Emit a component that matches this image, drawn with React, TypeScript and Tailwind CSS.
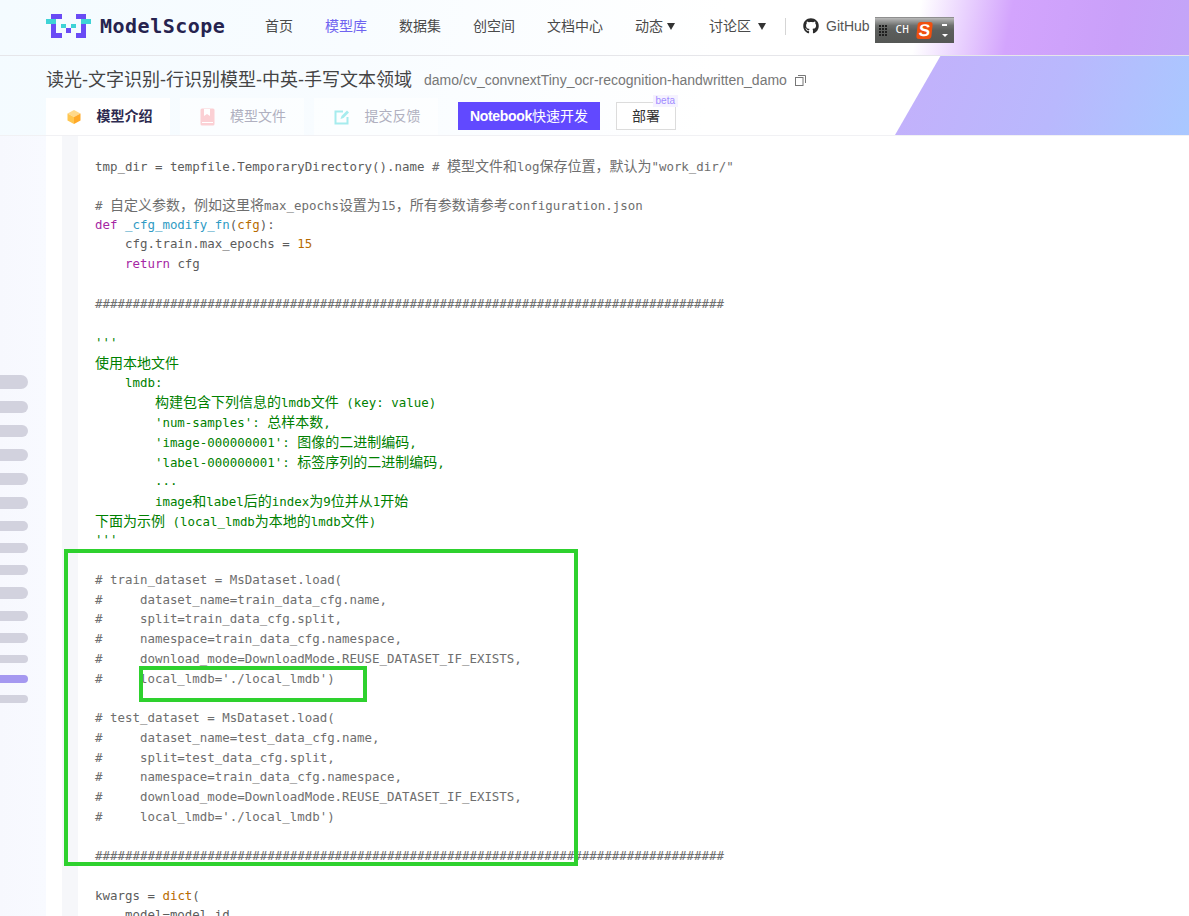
import { FaGithub } from "react-icons/fa";

const GRAY = "text-[#5c5c5c]";
const COMMENT = "text-[#6e6e6e]";
const GREEN = "text-[#008000]";
const PURPLE = "text-[#a626a4]";
const BLUE = "text-[#2f9bc4]";
const ORANGE = "text-[#b76b01]";

type Token = [string, string];
type Line = Token[];

const hashes = "#".repeat(84);
const c = (t: string): Line => [[t, COMMENT]];
const g = (t: string): Line => [[t, GREEN]];
const t = (s: string): Line => [[s, GRAY]];

const CODE: Line[] = [
  [
    ["tmp_dir = tempfile.TemporaryDirectory().name ", GRAY],
    ['# 模型文件和log保存位置，默认为"work_dir/"', COMMENT],
  ],
  [],
  c("# 自定义参数，例如这里将max_epochs设置为15，所有参数请参考configuration.json"),
  [
    ["def ", PURPLE],
    ["_cfg_modify_fn", BLUE],
    ["(", GRAY],
    ["cfg", ORANGE],
    ["):", GRAY],
  ],
  [
    ["    cfg.train.max_epochs = ", GRAY],
    ["15", ORANGE],
  ],
  [
    ["    ", GRAY],
    ["return", PURPLE],
    [" cfg", GRAY],
  ],
  [],
  c(hashes),
  [],
  g("'''"),
  g("使用本地文件"),
  g("    lmdb:"),
  g("        构建包含下列信息的lmdb文件 (key: value)"),
  g("        'num-samples': 总样本数,"),
  g("        'image-000000001': 图像的二进制编码,"),
  g("        'label-000000001': 标签序列的二进制编码,"),
  g("        ..."),
  g("        image和label后的index为9位并从1开始"),
  g("下面为示例 (local_lmdb为本地的lmdb文件)"),
  g("'''"),
  [],
  c("# train_dataset = MsDataset.load("),
  c("#     dataset_name=train_data_cfg.name,"),
  c("#     split=train_data_cfg.split,"),
  c("#     namespace=train_data_cfg.namespace,"),
  c("#     download_mode=DownloadMode.REUSE_DATASET_IF_EXISTS,"),
  c("#     local_lmdb='./local_lmdb')"),
  [],
  c("# test_dataset = MsDataset.load("),
  c("#     dataset_name=test_data_cfg.name,"),
  c("#     split=test_data_cfg.split,"),
  c("#     namespace=train_data_cfg.namespace,"),
  c("#     download_mode=DownloadMode.REUSE_DATASET_IF_EXISTS,"),
  c("#     local_lmdb='./local_lmdb')"),
  [],
  c(hashes),
  [],
  [
    ["kwargs = ", GRAY],
    ["dict", ORANGE],
    ["(", GRAY],
  ],
  t("    model=model_id,"),
];

// outline rail on the left edge: [height, gap above]
const PILLS: [number, number][] = [
  [14, 0], [12, 12], [12, 12], [12, 12], [12, 12], [12, 12], [10, 12], [10, 12],
  [10, 12], [12, 12], [10, 12], [10, 12], [8, 12], [8, 12], [8, 12],
];

// latin is narrower than the CJK in the mono stack, so CJK runs get their own size
function CodeText({ text }: { text: string }) {
  const parts = text.split(/([\u3000-\u9fff\uff00-\uffef]+)/);
  return (
    <>
      {parts.map((p, i) =>
        i % 2 === 1 ? (
          <span key={i} className="font-['Noto_Sans_CJK_SC',sans-serif] text-[14px]">
            {p}
          </span>
        ) : (
          <span key={i}>{p}</span>
        ),
      )}
    </>
  );
}

function Logo() {
  const purple = "#6a4bf5";
  const teal = "#3fd3d6";
  return (
    <svg width="46" height="25" viewBox="46 13 46 25" className="shrink-0" shapeRendering="crispEdges">
      <g fill={purple}>
        <rect x="51" y="13" width="11" height="5" />
        <rect x="51" y="23" width="5" height="14" />
        <rect x="51" y="32" width="11" height="5" />
        <rect x="76" y="13" width="10" height="5" />
        <rect x="81" y="23" width="5" height="14" />
        <rect x="76" y="32" width="10" height="5" />
        <rect x="66" y="27" width="5" height="5" />
      </g>
      <g fill={teal}>
        <rect x="46" y="18" width="10" height="5" />
        <rect x="81" y="18" width="10" height="5" />
        <rect x="61" y="23" width="5" height="4" />
        <rect x="71" y="23" width="5" height="4" />
      </g>
    </svg>
  );
}

function Cube() {
  return (
    <svg width="16" height="16" viewBox="0 0 16 16" className="shrink-0">
      <path d="M8 1l6.5 3.4L8 8 1.5 4.4z" fill="#ffd98a" />
      <path d="M1.5 4.4L8 8v7l-6.5-3.5z" fill="#ffc64f" />
      <path d="M14.5 4.4L8 8v7l6.5-3.5z" fill="#ffa928" />
    </svg>
  );
}

function Book() {
  return (
    <svg width="15" height="18" viewBox="0 0 15 18" className="shrink-0">
      <rect x="0.5" y="0.5" width="14" height="17" rx="1.5" fill="#fbd0d4" />
      <path d="M4 1h6v7L7 6 4 8z" fill="#fff" />
      <rect x="2" y="14" width="11" height="1" fill="#fff" />
    </svg>
  );
}

function EditIcon() {
  return (
    <svg width="16" height="16" viewBox="0 0 16 16" fill="none" className="shrink-0">
      <path d="M9 2.5H1.5v12h12V8" stroke="#a6ecee" strokeWidth="2" />
      <path d="M6.5 10l1-3L13 1.5l2 2L9.5 9z" fill="#a6ecee" />
    </svg>
  );
}

function CopyIcon() {
  return (
    <svg width="11" height="11" viewBox="0 0 11 11" fill="none" className="shrink-0">
      <rect x="0.5" y="2.5" width="7.5" height="8" stroke="#777" />
      <path d="M3 .5h7.5V8" stroke="#777" />
    </svg>
  );
}

function ImeBar() {
  return (
    <div className="mt-[7px] ml-[5px] flex h-[26px] w-[79px] items-center border-t border-[#8f8f8f] bg-[linear-gradient(#b9b9b9_0%,#6e706e_30%,#5c5e5c_50%,#555755_100%)] pl-[4px]">
      <div className="grid grid-cols-3 gap-[1px]">
        {Array.from({ length: 12 }).map((_, i) => (
          <span key={i} className="h-[2px] w-[2px] bg-[#1f1f1f]" />
        ))}
      </div>
      <span className="ml-[9px] font-['DejaVu_Sans_Mono',monospace] text-[11px] text-white">CH</span>
      <span className="ml-[8px] flex h-[17px] w-[15px] skew-x-[-6deg] items-center justify-center rounded-[3px] bg-[#f0500f] font-['Liberation_Sans',sans-serif] text-[17px] leading-none font-bold text-white">
        S
      </span>
      <div className="ml-[10px] flex flex-col items-center gap-[8px]">
        <span className="h-[2px] w-[5px] bg-white" />
        <span className="h-0 w-0 border-x-[3px] border-t-[3px] border-x-transparent border-t-white" />
      </div>
    </div>
  );
}

function NavItem({ label, active, caret }: { label: string; active?: boolean; caret?: string }) {
  return (
    <span className={`flex items-center ${active ? "text-[#6f63f0]" : "text-[#4a4a4a]"}`}>
      {label}
      {caret && <span className={`${caret} h-0 w-0 border-x-[4px] border-t-[7px] border-x-transparent border-t-[#333]`} />}
    </span>
  );
}

function Tab({ icon, label, active }: { icon: React.ReactNode; label: string; active?: boolean }) {
  return (
    <div
      className={`flex h-[37px] w-[124px] items-center justify-center gap-[15px] pl-[2px] text-[14px] ${
        active ? "bg-white font-bold text-[#2d2a50]" : "bg-white/50 text-[#b0b0c0]"
      }`}
    >
      {icon}
      {label}
    </div>
  );
}

export default function App() {
  return (
    <div className="relative flex h-[916px] w-full flex-col overflow-hidden bg-white font-['Liberation_Sans','Noto_Sans_CJK_SC',sans-serif]">
      <header className="relative h-[136px] shrink-0 border-b border-[#f1f1f4] bg-[linear-gradient(100deg,#f4fbff_0%,#f8fcff_30%,#ffffff_60%)]">
        {/* purple wash behind the header */}
        <div className="absolute top-0 right-0 h-[55px] w-[360px] bg-[linear-gradient(100deg,rgba(255,255,255,0)_25%,#d3a4fd_50%,#c9a0f9_80%,#c3a5f8_100%)]" />
        <div className="absolute top-[55px] right-0 h-[80px] w-[294px] bg-[linear-gradient(110deg,#c4b0fb_0%,#b9b8fd_55%,#a9c8ff_100%)] [clip-path:polygon(46px_0,100%_0,100%_100%,0_100%)]" />

        <nav className="relative flex h-[56px] items-center border-b border-[#e6e6ea] pb-[3px] pl-[46px] text-[14px]">
          <Logo />
          <span className="ml-[8px] w-[157px] font-['DejaVu_Sans_Mono',monospace] text-[20px] leading-none font-bold tracking-[0.5px] text-[#26234f]">
            ModelScope
          </span>
          <div className="ml-[8px] flex items-center gap-[32px]">
            <NavItem label="首页" />
            <NavItem label="模型库" active />
            <NavItem label="数据集" />
            <NavItem label="创空间" />
            <NavItem label="文档中心" />
            <NavItem label="动态" caret="ml-[4px]" />
            <span className="ml-[2px]">
              <NavItem label="讨论区" caret="ml-[7px]" />
            </span>
          </div>
          <span className="ml-[19px] h-[17px] w-px bg-[#d5d5d5]" />
          <FaGithub className="ml-[17px] shrink-0 text-[#2b2b2b]" size={16} />
          <span className="ml-[7px] text-[#555]">GitHub</span>
          <ImeBar />
        </nav>

        <div className="relative flex h-[42px] items-center pt-[6px] pl-[46px]">
          <h1 className="text-[18px] leading-none font-normal text-[#444]">读光-文字识别-行识别模型-中英-手写文本领域</h1>
          <span className="ml-[12px] text-[14px] text-[#777]">damo/cv_convnextTiny_ocr-recognition-handwritten_damo</span>
          <span className="ml-[8px]">
            <CopyIcon />
          </span>
        </div>

        <div className="relative flex items-start pl-[46px]">
          <Tab icon={<Cube />} label="模型介绍" active />
          <span className="w-[10px]" />
          <Tab icon={<Book />} label="模型文件" />
          <span className="w-[10px]" />
          <Tab icon={<EditIcon />} label="提交反馈" />
          <button className="mt-[4px] ml-[20px] flex h-[28px] w-[142px] items-center justify-center bg-[#6149ff] text-[14px] text-white">
            <span className="font-bold tracking-[-0.3px]">Notebook</span>快速开发
          </button>
          <button className="relative mt-[4px] ml-[16px] flex h-[28px] w-[60px] items-center justify-center border border-[#dcdcdc] bg-white text-[14px] text-[#333]">
            部署
            <span className="absolute top-[-8px] right-[-3px] bg-[#f5f2ff] px-[3px] text-[10px] leading-[12px] text-[#a08bff]">
              beta
            </span>
          </button>
        </div>
      </header>

      <main className="flex min-h-0 flex-1 bg-white">
        <aside className="flex w-[46px] shrink-0 flex-col bg-[linear-gradient(90deg,#f7f8fe,#f8faff)] pt-[239px]">
          {PILLS.map(([h, gap], i) => (
            <span
              key={i}
              className={`w-[28px] rounded-r-full ${i === 13 ? "bg-[#a598f0]" : "bg-[#d2d2de]"}`}
              style={{ height: h, marginTop: gap }}
            />
          ))}
        </aside>
        <div className="ml-[16px] w-[16px] shrink-0 bg-[#f6f7fa]" />
        <pre className="min-w-0 flex-1 pt-[19.5px] pl-[17px] font-['DejaVu_Sans_Mono','Noto_Sans_CJK_SC',monospace] text-[12.45px] leading-[19.74px]">
          {CODE.map((line, i) => (
            <div key={i} className="h-[19.74px] overflow-visible">
              {line.map(([text, color], j) => (
                <span key={j} className={color}>
                  <CodeText text={text} />
                </span>
              ))}
            </div>
          ))}
        </pre>
      </main>

      {/* hand-drawn annotation boxes on top of the screenshot */}
      <div className="absolute top-[549px] left-[64px] h-[317px] w-[514px] border-4 border-[#2ed12e]" />
      <div className="absolute top-[666px] left-[139px] h-[36px] w-[228px] border-4 border-[#2ed12e]" />
    </div>
  );
}
